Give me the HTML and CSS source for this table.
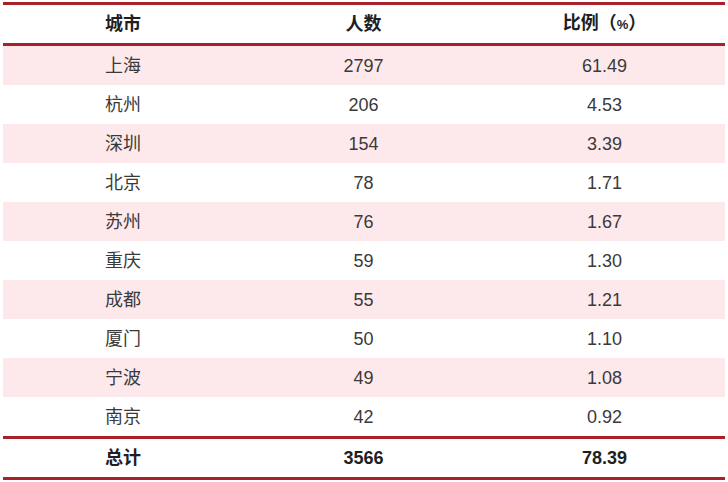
FILE: index.html
```html
<!DOCTYPE html>
<html lang="zh">
<head>
<meta charset="utf-8">
<link rel="stylesheet" href="styles.css">
</head>
<body>
<table class="data">
  <colgroup><col class="c1"><col class="c2"><col class="c3"></colgroup>
  <thead>
    <tr><th>城市</th><th>人数</th><th>比例（<span class="pct">%</span>）</th></tr>
  </thead>
  <tbody>
    <tr class="alt"><td>上海</td><td>2797</td><td>61.49</td></tr>
    <tr><td>杭州</td><td>206</td><td>4.53</td></tr>
    <tr class="alt"><td>深圳</td><td>154</td><td>3.39</td></tr>
    <tr><td>北京</td><td>78</td><td>1.71</td></tr>
    <tr class="alt"><td>苏州</td><td>76</td><td>1.67</td></tr>
    <tr><td>重庆</td><td>59</td><td>1.30</td></tr>
    <tr class="alt"><td>成都</td><td>55</td><td>1.21</td></tr>
    <tr><td>厦门</td><td>50</td><td>1.10</td></tr>
    <tr class="alt"><td>宁波</td><td>49</td><td>1.08</td></tr>
    <tr><td>南京</td><td>42</td><td>0.92</td></tr>
  </tbody>
  <tfoot>
    <tr><td>总计</td><td>3566</td><td>78.39</td></tr>
  </tfoot>
</table>
</body>
</html>
```
FILE: styles.css
```css
html, body {
  margin: 0;
  padding: 0;
  background: #ffffff;
}
body {
  padding: 2px 3px 0 3px;
  font-family: "Liberation Sans", "Noto Sans CJK SC", sans-serif;
  font-size: 18px;
  color: #3a3a3a;
}
.data {
  width: 722px;
  border-collapse: collapse;
  table-layout: fixed;
}
.c1 { width: 240px; }
.c2 { width: 241px; }
.c3 { width: 241px; }
.data th,
.data td {
  text-align: center;
  padding: 0;
  line-height: 20px;
}
.data thead tr {
  border-top: 3px solid #a8202a;
  border-bottom: 3px solid #a8202a;
}
.data th {
  height: 38px;
  font-weight: bold;
  color: #1f1f1f;
}
.pct {
  font-size: 13px;
}
.data tbody td {
  height: 39px;
}
.data tbody tr.alt {
  background: #fde9ec;
}
.data tfoot tr {
  border-top: 3px solid #a8202a;
  border-bottom: 3px solid #a8202a;
}
.data tfoot td {
  height: 38px;
  font-weight: bold;
  color: #1f1f1f;
}
```
